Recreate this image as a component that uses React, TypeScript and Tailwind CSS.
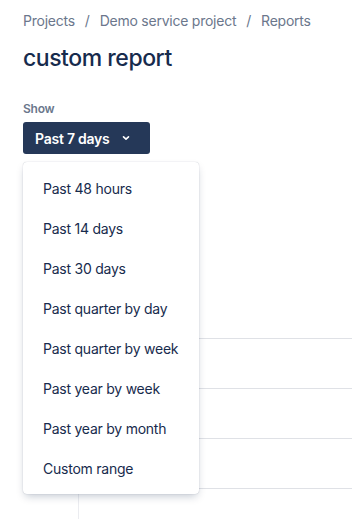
import React from "react";

const items = [
  "Past 48 hours",
  "Past 14 days",
  "Past 30 days",
  "Past quarter by day",
  "Past quarter by week",
  "Past year by week",
  "Past year by month",
  "Custom range",
];

export default function App() {
  return (
    <div
      className="relative h-[519px] w-[352px] overflow-hidden bg-white tracking-[-0.015em]"
      style={{ fontFamily: "Inter, 'Noto Sans', sans-serif" }}
    >
      <div className="pl-[23px] pt-[10px]">
        <div className="flex h-[20px] items-center text-[14px] text-[#6B778C]">
          <span>Projects</span>
          <span className="mx-[10px]">/</span>
          <span>Demo service project</span>
          <span className="mx-[10px]">/</span>
          <span>Reports</span>
        </div>
        <h1 className="mt-[14px] h-[28px] text-[23px] font-medium leading-[28px] tracking-[-0.02em] text-[#172B4D]">
          custom report
        </h1>
        <div className="mt-[29px] h-[16px] text-[12px] font-semibold leading-[16px] text-[#6B778C]">
          Show
        </div>
        <div className="relative mt-[5px]">
          <button className="flex h-[32px] w-[127px] items-center rounded-[3px] bg-[#253858] pl-[12px] text-[14px] font-semibold text-white">
            <span>Past 7 days</span>
            <svg
              className="ml-[11px]"
              width="10"
              height="10"
              viewBox="0 0 10 10"
              fill="none"
            >
              <path
                d="M2.5 3.8 L5 6.2 L7.5 3.8"
                stroke="white"
                strokeWidth="1.6"
                strokeLinecap="round"
                strokeLinejoin="round"
              />
            </svg>
          </button>
          <div className="absolute left-0 top-[40px] z-10 w-[176px] rounded-[4px] bg-white py-[6px] shadow-[0_4px_8px_-2px_rgba(9,30,66,0.25),0_0_1px_rgba(9,30,66,0.31)]">
            {items.map((it) => (
              <div
                key={it}
                className="flex h-[40px] items-center pl-[20px] text-[14px] text-[#172B4D]"
              >
                {it}
              </div>
            ))}
          </div>
        </div>
      </div>
      <div className="ml-[78px] mt-[184px] border-l border-[#EBECF0]">
        {[0, 1, 2, 3].map((i) => (
          <div key={i} className="h-[50px] border-t border-[#DFE1E6]" />
        ))}
        <div className="h-[40px]" />
      </div>
    </div>
  );
}
